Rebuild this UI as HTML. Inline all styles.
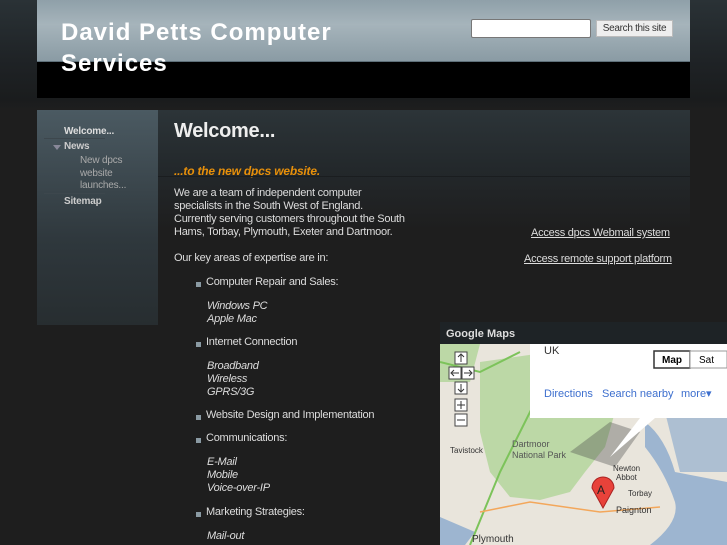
<!DOCTYPE html>
<html><head><meta charset="utf-8"><style>
*{margin:0;padding:0;box-sizing:border-box}
body{width:727px;height:545px;overflow:hidden;background:linear-gradient(#2a3236 0,#1f2326 60px,#1a1c1d 100px,#1e1e1e 110px,#1e1e1e 100%);font-family:"Liberation Sans",sans-serif;position:relative;color:#ddd}
.abs{position:absolute}
#hdr{left:37px;top:0;width:653px;height:98px;background:#000}
#hdrtop{left:37px;top:0;width:653px;height:62px;background:linear-gradient(#8fa0a9,#a6b4bb 40%,#8a9ba4);border-bottom:1px solid #5f707a}
#title{left:61px;top:17px;font-size:24px;font-weight:bold;color:#fff;letter-spacing:1px;line-height:31px}
#search{left:471px;top:19px;width:120px;height:19px;background:#fff;border:1px solid #777;border-radius:2px}
#sbtn{left:596px;top:20px;width:77px;height:17px;background:#eee;border:1px solid #bbb;font-size:10px;color:#333;text-align:center;line-height:16px;letter-spacing:-0.3px}
#side{left:37px;top:110px;width:121px;height:215px;background:linear-gradient(#4b5a62,#2f383d 60%,#272d30)}
#main{left:158px;top:110px;width:532px;height:435px;background:linear-gradient(#2c3438,#23282b 60px,#1e1e1e 120px)}
.nav{font-size:10px;color:#ddd;font-weight:bold;letter-spacing:-0.2px}
.sub{font-size:10px;color:#aaa;line-height:12.5px;letter-spacing:-0.2px}
.t{font-size:11px;color:#ddd;line-height:13px;letter-spacing:-0.25px}
.i{font-style:italic}
.b{width:5px;height:5px;background:#8a9aa3}
#map{left:440px;top:322px;width:287px;height:223px;overflow:hidden}
</style></head><body>
<div id="hdr" class="abs"></div>
<div id="hdrtop" class="abs"></div>
<div id="title" class="abs">David Petts Computer<br>Services</div>
<div id="search" class="abs"></div>
<div id="sbtn" class="abs">Search this site</div>
<div id="side" class="abs"></div>
<div id="main" class="abs"></div>
<div class="abs nav" style="left:64px;top:126px">Welcome...</div>
<div class="abs" style="left:44px;top:138px;width:61px;height:1px;background:#3d474d"></div>
<div class="abs nav" style="left:64px;top:141px;color:#ccc">News</div>
<div class="abs" style="left:53px;top:145px;border-left:4px solid transparent;border-right:4px solid transparent;border-top:5px solid #889"></div>
<div class="abs sub" style="left:80px;top:155px">New dpcs<br>website<br>launches...</div>
<div class="abs" style="left:44px;top:193px;width:61px;height:1px;background:#3d474d"></div>
<div class="abs nav" style="left:64px;top:196px;color:#ccc">Sitemap</div>
<div class="abs" style="left:174px;top:120px;font-size:20px;font-weight:bold;color:#eee;letter-spacing:-0.3px">Welcome...</div>
<div class="abs" style="left:174px;top:164px;font-size:12px;font-weight:bold;font-style:italic;color:#e8900a;letter-spacing:-0.2px">...to the new dpcs website.</div>
<div class="abs" style="left:158px;top:176px;width:532px;height:1px;background:#1a1d1f"></div>
<div class="abs t" style="left:174px;top:187px">We are a team of independent computer<br>specialists in the South West of England.<br>Currently serving customers throughout the South<br>Hams, Torbay, Plymouth, Exeter and Dartmoor.<br><br>Our key areas of expertise are in:</div>
<div class="abs t" style="left:531px;top:227px;text-decoration:underline">Access dpcs Webmail system</div>
<div class="abs t" style="left:524px;top:253px;text-decoration:underline">Access remote support platform</div>
<div class="abs b" style="left:196px;top:282px"></div><div class="abs t" style="left:206px;top:276px">Computer Repair and Sales:</div>
<div class="abs t i" style="left:207px;top:300px">Windows PC<br>Apple Mac</div>
<div class="abs b" style="left:196px;top:342px"></div><div class="abs t" style="left:206px;top:336px">Internet Connection</div>
<div class="abs t i" style="left:207px;top:360px">Broadband<br>Wireless<br>GPRS/3G</div>
<div class="abs b" style="left:196px;top:415px"></div><div class="abs t" style="left:206px;top:409px">Website Design and Implementation</div>
<div class="abs b" style="left:196px;top:438px"></div><div class="abs t" style="left:206px;top:432px">Communications:</div>
<div class="abs t i" style="left:207px;top:456px">E-Mail<br>Mobile<br>Voice-over-IP</div>
<div class="abs b" style="left:196px;top:512px"></div><div class="abs t" style="left:206px;top:506px">Marketing Strategies:</div>
<div class="abs t i" style="left:207px;top:530px">Mail-out</div>
<div id="map" class="abs">
<svg width="287" height="223" style="position:absolute;left:0;top:0">
<rect width="287" height="223" fill="#e9e5dc"/>
<path d="M0 22 L40 22 L30 60 L0 60Z" fill="#bcd8a6"/>
<path d="M40 40 L110 30 L160 50 L175 90 L165 125 L145 150 L130 170 L100 178 L70 175 L50 150 L40 110 L40 70Z" fill="#bcd8a6"/>
<path d="M205 100 Q225 115 235 150 L287 160 L287 223 L210 223 Q240 200 235 180 Q225 150 205 125Z" fill="#9db5d0"/>
<path d="M225 90 L287 80 L287 150 L240 150Z" fill="#9db5d0" opacity=".8"/>
<path d="M0 195 L35 210 L25 223 L0 223Z" fill="#9db5d0"/>
<path d="M30 223 L60 150 L100 70 L160 20" stroke="#7cc35a" stroke-width="2" fill="none"/>
<path d="M0 40 L40 50 L80 30" stroke="#7cc35a" stroke-width="2" fill="none"/>
<path d="M40 190 L90 180 L160 190 L220 185" stroke="#f3a75b" stroke-width="1.5" fill="none"/>
<path d="M130 130 L170 100 L200 110 L175 145Z" fill="#444" opacity=".35"/>
<rect x="0" y="0" width="287" height="22" fill="#1e2326"/>
<text x="6" y="15" font-family="Liberation Sans" font-size="11" font-weight="bold" fill="#ddd">Google Maps</text>
<rect x="90" y="22" width="197" height="74" fill="#fff"/>
<path d="M200 96 L170 135 L215 96Z" fill="#fff"/>
<text x="104" y="32" font-family="Liberation Sans" font-size="11" fill="#333">UK</text>
<rect x="214" y="29" width="36" height="17" fill="#fff" stroke="#333" stroke-width="1.5"/>
<text x="222" y="41" font-family="Liberation Sans" font-size="10" font-weight="bold" fill="#000">Map</text>
<rect x="250" y="29" width="37" height="17" fill="#fff" stroke="#999"/>
<text x="259" y="41" font-family="Liberation Sans" font-size="10" fill="#000">Sat</text>
<text x="104" y="75" font-family="Liberation Sans" font-size="11" fill="#3d6fce">Directions</text>
<text x="162" y="75" font-family="Liberation Sans" font-size="11" fill="#3d6fce">Search nearby</text>
<text x="241" y="75" font-family="Liberation Sans" font-size="11" fill="#3d6fce">more▾</text>
<g fill="#fff" stroke="#444"><rect x="15" y="30" width="12" height="12"/><rect x="9" y="45" width="12" height="12"/><rect x="22" y="45" width="12" height="12"/><rect x="15" y="60" width="12" height="12"/><rect x="15" y="77" width="12" height="12"/><rect x="15" y="92" width="12" height="12"/></g>
<g stroke="#333" fill="none" stroke-width="1"><path d="M21 40V33M18 35L21 32L24 35"/><path d="M12 51H19M14 48L11 51L14 54"/><path d="M24 51H31M29 48L32 51L29 54"/><path d="M21 62V69M18 67L21 70L24 67"/><path d="M17 83H25M21 79V87"/><path d="M17 98H25"/></g>
<text x="72" y="125" font-family="Liberation Sans" font-size="9" fill="#555">Dartmoor</text>
<text x="72" y="136" font-family="Liberation Sans" font-size="9" fill="#555">National Park</text>
<text x="10" y="131" font-family="Liberation Sans" font-size="8" fill="#333">Tavistock</text>
<text x="173" y="149" font-family="Liberation Sans" font-size="8" fill="#333">Newton</text>
<text x="176" y="158" font-family="Liberation Sans" font-size="8" fill="#333">Abbot</text>
<text x="188" y="174" font-family="Liberation Sans" font-size="8" fill="#333">Torbay</text>
<text x="176" y="191" font-family="Liberation Sans" font-size="9" fill="#333">Paignton</text>
<text x="32" y="220" font-family="Liberation Sans" font-size="10" fill="#333">Plymouth</text>
<path d="M163 186 L152 166 A11 11 0 1 1 174 166Z" fill="#e8423a" stroke="#a22"/>
<text x="157" y="172" font-family="Liberation Sans" font-size="12" fill="#222">A</text>
</svg>
</div>
</body></html>
